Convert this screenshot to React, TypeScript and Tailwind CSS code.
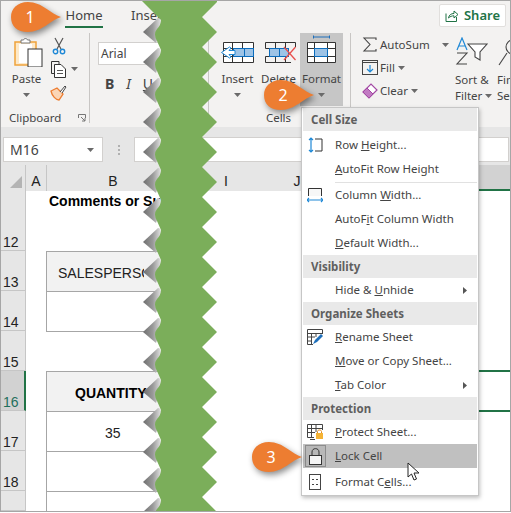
import React from "react";

const Chev = ({ className = "" }: { className?: string }) => (
  <svg width="7" height="4" viewBox="0 0 7 4" className={className}>
    <path d="M0 0H7L3.5 4Z" fill="#6a6a6a" />
  </svg>
);

const Callout = ({ n, className }: { n: string; className: string }) => (
  <div className={"absolute w-[52px] h-[31px] " + className}>
    <svg width="52" height="31" viewBox="0 0 52 31" className="overflow-visible drop-shadow-[2px_3px_3px_rgba(0,0,0,0.45)]">
      <path d="M50 15C40 12 31 0 17 0C6 0 0 7 0 15C0 24 6 30 17 30C31 30 40 18 50 15Z" fill="#ed7d31" />
    </svg>
    <span className="absolute left-[11px] top-[3px] w-[16px] text-center text-[16px] leading-[24px] text-white">{n}</span>
  </div>
);

const GridIcon = ({ children }: { children: React.ReactNode }) => (
  <svg width="36" height="30" viewBox="0 0 36 30" fill="none">{children}</svg>
);

const RibbonBtn = ({ label, w, active, icon }: { label: string; w: string; active?: boolean; icon: React.ReactNode }) => (
  <div className={"flex h-[73px] shrink-0 flex-col items-center pt-[1px] " + w + (active ? " bg-[#c6c6c6]" : "")}>
    {icon}
    <div className="mt-[7px] leading-[16px]">{label}</div>
    <Chev className="mt-[6px]" />
  </div>
);

const Item = ({ icon, children, arrow, hover, first }: { icon?: React.ReactNode; children: React.ReactNode; arrow?: boolean; hover?: boolean; first?: boolean }) => (
  <div className={"flex h-[24px] items-center" + (hover ? " bg-[#c0c0c0]" : "") + (first ? " mt-[2px]" : "")}>
    <div className="flex h-full w-[32px] items-center justify-center pr-[8px]">{icon}</div>
    <div className="flex-1 whitespace-pre leading-[24px]">{children}</div>
    {arrow && (
      <svg width="4" height="7" viewBox="0 0 4 7" className="mr-[10px]">
        <path d="M0 0L4 3.5L0 7Z" fill="#555" />
      </svg>
    )}
  </div>
);

const Head = ({ children }: { children: React.ReactNode }) => (
  <div className="flex h-[23px] items-center bg-[#e9e9e9] pl-[8px] font-bold text-[#5f5f5f]">{children}</div>
);

const rowsData: { n: string; h: string; border: boolean; left: boolean; fill: boolean; num: string }[] = [
  { n: "12", h: "h-[60px]", border: false, left: false, fill: false, num: "" },
  { n: "13", h: "h-[40px]", border: true, left: true, fill: true, num: "" },
  { n: "14", h: "h-[40px]", border: true, left: true, fill: false, num: "" },
  { n: "15", h: "h-[40px]", border: true, left: false, fill: false, num: "" },
  { n: "16", h: "h-[40px]", border: true, left: true, fill: true, num: "" },
  { n: "17", h: "h-[40px]", border: true, left: true, fill: false, num: "35" },
  { n: "18", h: "h-[40px]", border: true, left: true, fill: false, num: "" },
  { n: "", h: "h-[20px]", border: true, left: true, fill: false, num: "" },
];

const tearLeft = Array.from({ length: 18 }, (_, k) => k * 30);

export default function App() {
  return (
    <div className="relative h-[512px] w-[511px] overflow-hidden border border-[#a6a6a6] bg-white text-[11.5px] text-[#444] [font-family:'Noto_Sans',sans-serif]">
      {/* Ribbon */}
      <div className="h-[126px] bg-[#f3f2f1]">
        <div className="flex h-[32px] items-start">
          <div className="ml-[64px] mt-[6px] flex h-[21px] w-[38px] justify-center border-b-2 border-[#217346] text-[13px] leading-[17px]">Home</div>
          <div className="ml-[28px] mt-[6px] text-[13px] leading-[17px]">Insert</div>
          <div className="ml-auto mr-[4px] mt-[3px] flex h-[23px] w-[67px] items-center justify-center gap-[5px] rounded-[2px] border border-[#e1dfdd] bg-white text-[13px] font-semibold text-[#217346]">
            <svg width="14" height="13" viewBox="0 0 14 13" fill="none" stroke="#217346">
              <path d="M1 4.5V12.5H11.5V8" />
              <path d="M3.5 9C4 6 6 4.5 9 4.5V2L13 5.5L9 9V6.8C7 6.8 5 7.5 3.5 9Z" />
            </svg>
            Share
          </div>
        </div>
        <div className="flex h-[90px]">
          {/* Clipboard */}
          <div className="flex h-full w-[89px] flex-col border-r border-[#c8c6c4]">
            <div className="flex h-[73px] shrink-0">
              <div className="flex w-[47px] flex-col items-center pl-[4px] pt-[4px]">
                <svg width="29" height="30" viewBox="0 0 29 30" fill="none" className="ml-[3px]">
                  <rect x="1" y="5" width="21" height="23" fill="#fde9c9" stroke="#f0a33a" strokeWidth="1.5" />
                  <rect x="5" y="7" width="13" height="19" fill="#fff" />
                  <path d="M7 6V3H9.5C10 1 13 1 13.5 3H16V6Z" fill="#fff" stroke="#777" />
                  <rect x="14" y="12" width="14" height="18" fill="#fff" stroke="#333" />
                </svg>
                <div className="mt-[4px] leading-[16px]">Paste</div>
                <Chev className="mt-[6px]" />
              </div>
              <div className="flex flex-col pl-[2px] pt-[4px]">
                <svg width="14" height="18" viewBox="0 0 14 18" fill="none" className="ml-[2px]">
                  <path d="M3 1L9 12M11 1L5 12" stroke="#555" strokeWidth="1.2" />
                  <circle cx="3.5" cy="14.5" r="2.2" stroke="#1e88d6" strokeWidth="1.4" />
                  <circle cx="10.5" cy="14.5" r="2.2" stroke="#1e88d6" strokeWidth="1.4" />
                </svg>
                <div className="mt-[5px] flex items-center gap-[3px]">
                  <svg width="18" height="18" viewBox="0 0 18 18" fill="none" stroke="#333">
                    <path d="M4 13.5H1.5V1.5H9V4" />
                    <path d="M4.5 4.5H11L15.5 9V17.5H4.5Z" fill="#fff" />
                    <path d="M7 10.5H13M7 13.5H13" stroke="#555" />
                  </svg>
                  <Chev />
                </div>
                <svg width="17" height="17" viewBox="0 0 17 17" fill="none" className="mt-[6px]">
                  <path d="M1 7L7 4L13 10L9 16C6 16 2 12 1 7Z" fill="#fbd5b5" stroke="#ed7d31" strokeWidth="1.3" />
                  <path d="M10 8L15 2L16 3L12 9" fill="#fff" stroke="#444" />
                </svg>
              </div>
            </div>
            <div className="mt-[4px] flex items-center pl-[8px] leading-[16px]">
              <span className="w-[69px]">Clipboard</span>
              <svg width="8" height="8" viewBox="0 0 8 8" fill="none" stroke="#777">
                <path d="M0.5 4V0.5H7.5V4M3 3L7 7M4 7H7V4" />
              </svg>
            </div>
          </div>
          {/* Font */}
          <div className="flex h-full w-[119px] flex-col border-r border-[#c8c6c4] pl-[8px]">
            <div className="mt-[9px] flex h-[23px] w-[90px] items-center border border-[#d2d0ce] bg-white pl-[2px] text-[12px]">Arial</div>
            <div className="mt-[10px] flex items-center gap-[12px] pl-[7px] text-[14px] leading-[18px]">
              <span className="font-bold">B</span>
              <span className="italic">I</span>
              <span className="underline">U</span>
            </div>
          </div>
          {/* Cells */}
          <div className="flex h-full w-[142px] flex-col border-r border-[#c8c6c4] pl-[9px]">
            <div className="flex shrink-0">
              <RibbonBtn
                label="Insert"
                w="w-[39px]"
                icon={
                  <GridIcon>
                    <path d="M3.5 8.5H33.5V28.5H3.5Z" fill="#fff" stroke="#333" />
                    <path d="M3.5 14.5H33.5M3.5 22.5H33.5M12.5 8.5V28.5M22.5 8.5V28.5" stroke="#333" />
                    <rect x="13.5" y="14.5" width="20" height="8" fill="#9dc3e6" stroke="#0b6cbd" />
                    <path d="M24.5 14.5V22.5" stroke="#0b6cbd" />
                    <path d="M15 16.5H9L11 14L9.5 13L1.5 18.5L9.5 24L11 23L9 20.5H15Z" fill="#fff" stroke="#1e88d6" />
                  </GridIcon>
                }
              />
              <RibbonBtn
                label="Delete"
                w="w-[43px]"
                icon={
                  <GridIcon>
                    <path d="M4.5 8.5H34.5M4.5 28.5H30M4.5 14.5H10M4.5 22.5H10M4.5 8.5V14.5M4.5 22.5V28.5M14.5 8.5V14.5M14.5 22.5V28.5M24.5 8.5V14.5M24.5 22.5V28.5M34.5 8.5V13" stroke="#333" />
                    <rect x="8.5" y="14.5" width="19" height="8" fill="#9dc3e6" stroke="#0b6cbd" />
                    <path d="M18.5 14.5V22.5" stroke="#0b6cbd" />
                    <path d="M23 13L34.5 26M34.5 13L23 26" stroke="#e8504e" strokeWidth="1.3" />
                  </GridIcon>
                }
              />
              <RibbonBtn
                label="Format"
                w="w-[43px]"
                active
                icon={
                  <GridIcon>
                    <path d="M9.5 1.5V4.5M25.5 1.5V4.5M9.5 3H25.5" stroke="#1e6fba" />
                    <path d="M3.5 8.5H31.5V28.5H3.5Z" fill="#fff" stroke="#333" />
                    <path d="M3.5 14.5H31.5M3.5 22.5H31.5M10.5 8.5V28.5M23.5 8.5V28.5" stroke="#333" />
                    <rect x="10.5" y="14.5" width="13" height="8" fill="#9dc3e6" stroke="#0b6cbd" />
                  </GridIcon>
                }
              />
            </div>
            <div className="mt-[4px] w-[121px] text-center leading-[16px]">Cells</div>
          </div>
          {/* Editing */}
          <div className="flex h-full min-w-0 flex-1 overflow-hidden pl-[11px]">
            <div className="w-[89px] shrink-0">
              <div className="flex h-[23px] items-center">
                <svg width="15" height="15" viewBox="0 0 15 15" fill="none" stroke="#444" strokeWidth="1.1">
                  <path d="M14 3V1H2L8 7.5L2 14H14V12" />
                </svg>
                <span className="ml-[3px] w-[62px]">AutoSum</span>
                <Chev />
              </div>
              <div className="flex h-[23px] items-center">
                <svg width="16" height="15" viewBox="0 0 16 15" fill="none">
                  <rect x="0.5" y="0.5" width="15" height="14" stroke="#444" />
                  <path d="M0.5 2.5H15.5" stroke="#444" />
                  <path d="M8 5V12M5 9L8 12L11 9" stroke="#1e88d6" strokeWidth="1.2" />
                </svg>
                <span className="ml-[2px] mr-[3px]">Fill</span>
                <Chev />
              </div>
              <div className="flex h-[23px] items-center">
                <svg width="16" height="16" viewBox="0 0 16 16" fill="none">
                  <path d="M1 9L9 1L15 7L7 15Z" fill="#fff" stroke="#a349a4" strokeWidth="1.2" />
                  <path d="M1 9L5 5L11 11L7 15Z" fill="#c17ac2" stroke="#a349a4" />
                </svg>
                <span className="ml-[2px] mr-[3px]">Clear</span>
                <Chev />
              </div>
            </div>
            <div className="flex w-[46px] shrink-0 flex-col items-start pl-[4px] pt-[4px]">
              <svg width="33" height="29" viewBox="0 0 33 29" fill="none">
                <path d="M2 13L7 1L12 13M4 9H10" stroke="#1e88d6" strokeWidth="1.2" />
                <path d="M2 16H12L2 27H12" stroke="#444" strokeWidth="1.1" />
                <path d="M13 7H32L25 15V23L20 20V15Z" fill="#fff" stroke="#444" strokeWidth="1.1" />
              </svg>
              <div className="mt-[6px] leading-[16px]">Sort &amp;</div>
              <div className="flex items-center gap-[3px] leading-[16px]">Filter<Chev /></div>
            </div>
            <div className="flex shrink-0 flex-col pt-[4px]">
              <svg width="14" height="29" viewBox="0 0 14 29" fill="none" stroke="#444" strokeWidth="1.1">
                <circle cx="16" cy="10" r="7" />
                <path d="M2 28L10 16" />
              </svg>
              <div className="mt-[6px] leading-[16px]">Find &amp;</div>
              <div className="leading-[16px]">Select</div>
            </div>
          </div>
        </div>
      </div>

      {/* Formula bar */}
      <div className="flex h-[38px] items-start bg-[#e6e6e6] pl-[2px] pt-[10px]">
        <div className="flex h-[25px] w-[100px] items-center justify-between border border-[#d2d0ce] bg-white pl-[6px] pr-[8px] text-[14px]">
          M16
          <Chev />
        </div>
        <div className="ml-[15px] flex h-[25px] w-[3px] flex-col justify-center gap-[2px]">
          <div className="h-[2px] w-[2px] bg-[#b0b0b0]" />
          <div className="h-[2px] w-[2px] bg-[#b0b0b0]" />
          <div className="h-[2px] w-[2px] bg-[#b0b0b0]" />
        </div>
        <div className="ml-[13px] mr-[1px] h-[25px] flex-1 border border-[#d2d0ce] bg-white" />
      </div>

      {/* Column headers */}
      <div className="flex h-[26px] bg-[#e6e6e6] text-[14px] text-[#222] [font-family:'Liberation_Sans',sans-serif]">
        <div className="flex w-[25px] items-end justify-end border-r border-[#c6c6c6] pb-[3px] pr-[3px]">
          <svg width="12" height="12" viewBox="0 0 12 12"><path d="M12 0V12H0Z" fill="#b4b4b4" /></svg>
        </div>
        <div className="w-[21px] border-r border-[#c6c6c6] pt-[6px] text-center leading-[20px]">A</div>
        <div className="w-[143px] pr-[11px] pt-[6px] text-center leading-[20px]">B</div>
        <div className="w-[72px] pt-[6px] text-center leading-[20px]">I</div>
        <div className="w-[70px] pt-[6px] text-center leading-[20px]">J</div>
        <div className="flex-1" />
        <div className="w-[31px] border-b-2 border-[#217346] bg-[#d2d2d2]" />
      </div>

      {/* Sheet rows */}
      <div className="text-[14px] text-black [font-family:'Liberation_Sans',sans-serif]">
        {rowsData.map((r) => (
          <div key={r.n + r.h + r.num} className={"flex " + r.h}>
            <div
              className={
                "relative flex w-[25px] items-end overflow-hidden border-b border-r border-[#c6c6c6] pl-[2px] leading-[16px] " +
                (r.n === "16" ? "border-r-2 border-r-[#217346] bg-[#d2d2d2] text-[#1f6f5c]" : "bg-[#e6e6e6] text-[#222]")
              }
            >
              {r.n}
            </div>
            <div className="w-[20px]" />
            <div
              className={
                "flex w-[130px] items-center overflow-hidden whitespace-nowrap border-[#a6a6a6] pt-[3px] " +
                (r.border ? "border-t " : "") +
                (r.left ? "border-l " : "") +
                (r.fill ? "bg-[#f2f2f2] " : "")
              }
            >
              {r.n === "12" && (
                <div className="-mt-[43px] pl-[3px] font-bold">Comments or Suggestions</div>
              )}
              {r.n === "13" && <div className="w-[97px] overflow-hidden pl-[11px] text-[#222]">SALESPERSON</div>}
              {r.n === "16" && <div className="pl-[28px] font-bold">QUANTITY</div>}
              {r.num && <div className="pl-[58px] text-[#222]">{r.num}</div>}
            </div>
            <div className="flex-1" />
            {r.n === "16" && <div className="-mt-[1px] h-[42px] w-[31px] border-y-2 border-[#217346]" />}
          </div>
        ))}
      </div>

      {/* Torn paper strip */}
      <svg className="absolute left-[139px] top-0 h-[510px] w-[80px]" viewBox="140 1 80 510">
        <defs>
          <linearGradient id="tearShade" x1="0" y1="0" x2="1" y2="0">
            <stop offset="0" stopColor="#6f6f6f" />
            <stop offset="0.55" stopColor="#9a9a9a" />
            <stop offset="1" stopColor="#e2e2e2" />
          </linearGradient>
        </defs>
        {tearLeft.map((o) => (
          <path
            key={o}
            d={`M143 ${32 + o}L158 ${18 + o}Q161 ${18 + o} 161 ${23 + o}L161 ${30 + o}L156 ${43 + o}Z`}
            fill="url(#tearShade)"
          />
        ))}
        <path
          fill="#7bae5a"
          d={
            "M142 1" +
            tearLeft.map((o) => `L161 ${20 + o}Q161 ${25 + o} 157 ${29 + o}Q153 ${34 + o} 157 ${41 + o}L161 ${50 + o}`).join("") +
            "L161 511L217 511" +
            tearLeft
              .slice()
              .reverse()
              .map((o) => `L217 ${32 + o}L202 ${17 + o}`)
              .join("") +
            "L217 2L217 1Z"
          }
        />
      </svg>

      {/* Dropdown menu */}
      <div className="absolute left-[300px] top-[106px] h-[389px] w-[178px] border border-[#c6c6c6] bg-white px-[1px] pb-[1px] shadow-[1px_2px_4px_rgba(0,0,0,0.25)]">
        <Head>Cell Size</Head>
        <Item
          first
          icon={
            <svg width="16" height="16" viewBox="0 0 16 16" fill="none">
              <path d="M8 2H15V14H8" stroke="#333" />
              <path d="M4 1V15M2 3L4 1L6 3M2 13L4 15L6 13" stroke="#1e88d6" strokeWidth="1.2" />
            </svg>
          }
        >
          Row <u>H</u>eight...
        </Item>
        <Item><u>A</u>utoFit Row Height</Item>
        <div className="flex h-[2px] items-center pl-[32px]">
          <div className="h-[1px] w-full bg-[#e1e1e1]" />
        </div>
        <Item
          icon={
            <svg width="16" height="16" viewBox="0 0 16 16" fill="none">
              <path d="M1.5 9V1.5H14.5V9" fill="#f7f7f7" stroke="#333" />
              <path d="M0 13H16M2 11L0 13L2 15M14 11L16 13L14 15" stroke="#1e88d6" strokeWidth="1.2" />
            </svg>
          }
        >
          Column <u>W</u>idth...
        </Item>
        <Item>AutoF<u>i</u>t Column Width</Item>
        <Item><u>D</u>efault Width...</Item>
        <Head>Visibility</Head>
        <Item arrow>Hide &amp; <u>U</u>nhide</Item>
        <Head>Organize Sheets</Head>
        <Item
          icon={
            <svg width="16" height="16" viewBox="0 0 16 16" fill="none">
              <path d="M0.5 0.5H15.5V5M6 15.5H0.5V0.5M0.5 4.5H15.5M0.5 8H8M0.5 12H5M4.5 4.5V15M9 4.5V8" stroke="#444" />
              <path d="M6 15L8 11L14 5L16 7L10 13Z" fill="#1e6fba" />
            </svg>
          }
        >
          <u>R</u>ename Sheet
        </Item>
        <Item><u>M</u>ove or Copy Sheet...</Item>
        <Item arrow><u>T</u>ab Color</Item>
        <Head>Protection</Head>
        <Item
          icon={
            <svg width="17" height="16" viewBox="0 0 17 16" fill="none">
              <path d="M0.5 0.5H15.5V6M7 13.5H0.5V0.5M0.5 4.5H15.5M0.5 8.5H8M4.5 0.5V13M9 0.5V8M3 15.5H8" stroke="#444" />
              <rect x="9" y="9" width="7" height="6" fill="#f5b335" />
              <path d="M10.5 9V7.5C10.5 5.5 14.5 5.5 14.5 7.5V9" stroke="#e08a1e" />
            </svg>
          }
        >
          <u>P</u>rotect Sheet...
        </Item>
        <Item
          hover
          icon={
            <div className="flex h-[22px] w-[21px] shrink-0 items-center justify-center border border-[#8c8c8c] bg-[#b8b8b8]">
              <svg width="13" height="17" viewBox="0 0 13 17" fill="none" stroke="#333">
                <rect x="0.5" y="7.5" width="12" height="9" fill="#f5f5f5" />
                <path d="M3 7.5V4C3 -0.5 10 -0.5 10 4V7.5" />
              </svg>
            </div>
          }
        >
          <u>L</u>ock Cell
        </Item>
        <div className="h-[2px]" />
        <Item
          icon={
            <svg width="12" height="16" viewBox="0 0 12 16" fill="none" stroke="#444">
              <rect x="0.5" y="0.5" width="11" height="15" />
              <path d="M3 5.5H5M3 10.5H5M7 5.5H9M7 10.5H9" />
            </svg>
          }
        >
          Format C<u>e</u>lls...
        </Item>
      </div>

      {/* Cursor */}
      <svg className="absolute left-[406px] top-[461px]" width="14" height="20" viewBox="0 0 14 20">
        <path d="M1 1V15L4.5 12L7 18L9.5 17L7 11H12Z" fill="#fff" stroke="#222" />
      </svg>

      <Callout n="1" className="left-[10px] top-[1px]" />
      <Callout n="2" className="left-[263px] top-[79px]" />
      <Callout n="3" className="left-[251px] top-[441px]" />
    </div>
  );
}
